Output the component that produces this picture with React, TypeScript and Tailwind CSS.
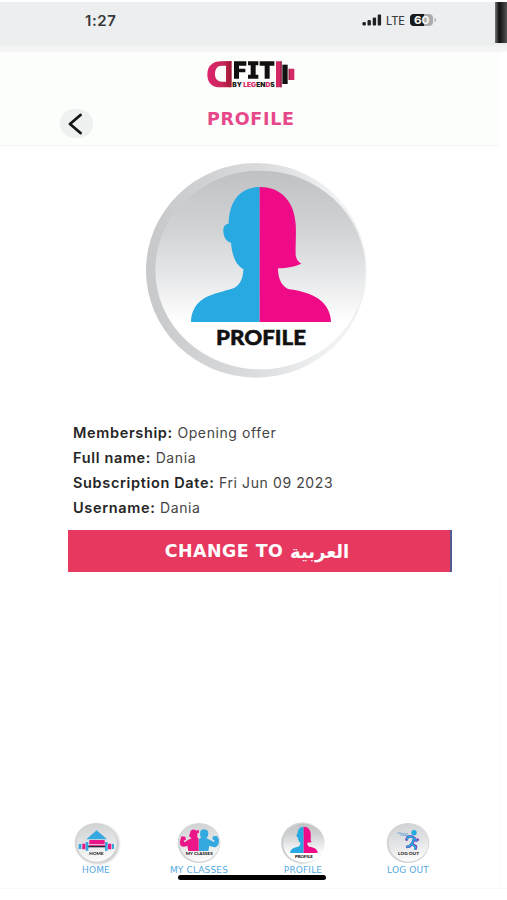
import React from "react";

const VERDANA = "font-['DejaVu_Sans',Verdana,sans-serif]";

function Silhouette() {
  return (
    <>
      <path fill="#29a9e1" d="M389 97C330 97 297 140 296 207C283 208 279 219 280 231C281 246 288 260 303 264C306 300 317 332 340 343C340 366 333 389 312 400C267 416 220 418 195 458C186 473 183 487 183 502H389Z" />
      <path fill="#ef0a87" d="M389 97C456 96 493 145 497 207C499 240 496 275 497 302C499 313 503 321 514 327C493 336 474 340 444 341C444 367 451 391 474 403C515 409 562 419 587 453C598 469 603 486 603 502H389Z" />
    </>
  );
}

function ProfileBadge({ small = false }: { small?: boolean }) {
  const id = small ? "small" : "large";
  return (
    <svg
      className={small ? "h-[42px] w-[44px] overflow-visible" : "h-[216px] w-[223px] shrink-0"}
      viewBox="45 22 669 648"
      preserveAspectRatio="none"
      aria-label="Profile"
    >
      <defs>
        <linearGradient id={`rim-${id}`} x1="0" y1=".45" x2="1" y2=".5">
          <stop offset="0" stopColor="#c6c8ca" />
          <stop offset=".5" stopColor="#dadbdc" />
          <stop offset=".85" stopColor="#f1f2f3" />
          <stop offset="1" stopColor="#eff0f1" />
        </linearGradient>
        <linearGradient id={`face-${id}`} x1="0" y1="0" x2="0" y2="1">
          <stop offset="0" stopColor="#bfc1c3" />
          <stop offset=".3" stopColor="#d1d3d4" />
          <stop offset=".55" stopColor="#e8e9ea" />
          <stop offset=".76" stopColor="#ffffff" />
        </linearGradient>
      </defs>
      <ellipse cx="379" cy="347" rx="331" ry="322" fill={`url(#rim-${id})`} />
      <ellipse cx="391" cy="346" rx="315" ry="298" fill={`url(#face-${id})`} />
      <Silhouette />
      <text x="258" y="571" textLength="270" lengthAdjust="spacingAndGlyphs" fill="#111" stroke="#111" strokeWidth="1.5" fontFamily="Lato, sans-serif" fontWeight="900" fontSize="63">PROFILE</text>
    </svg>
  );
}

function BadgeBase({ id }: { id: string }) {
  return (
    <>
      <defs>
        <linearGradient id={id} x1="0" y1="0" x2="0.15" y2="1">
          <stop offset="0" stopColor="#cfd0d2" />
          <stop offset=".6" stopColor="#e5e6e7" />
          <stop offset="1" stopColor="#fafafa" />
        </linearGradient>
      </defs>
      <ellipse cx="66" cy="63" rx="64" ry="60" fill="#d4d5d7" />
      <ellipse cx="68" cy="62" rx="60" ry="57" fill={`url(#${id})`} />
    </>
  );
}

function HomeBadge() {
  return (
    <svg className="h-[42px] w-[44px] overflow-visible drop-shadow-[2px_1px_1px_#cccccc]" viewBox="0 0 132 126" aria-label="Home">
      <BadgeBase id="home-face" />
      <path fill="#35a8df" d="M68 25 99 52H37Z" />
      <path fill="#e81688" d="M46 54H92V66H46Z" />
      <path fill="#26263c" d="M39 71H99V76H39Z" />
      <path fill="#35a8df" d="M35 60H43V86H35ZM93 60H101V86H93ZM14 66H22V81H14ZM114 66H120V81H114Z" />
      <path fill="#e81688" d="M25 65H34V82H25ZM102 65H112V82H102ZM45 68H94V71H45Z" />
      <text x="46" y="99" textLength="43" lengthAdjust="spacingAndGlyphs" fontFamily="Lato, sans-serif" fontWeight="900" fontSize="13" fill="#171717">HOME</text>
    </svg>
  );
}

function ClassesBadge() {
  return (
    <svg className="h-[42px] w-[44px] overflow-visible" viewBox="0 0 132 126" aria-label="My classes">
      <BadgeBase id="classes-face" />
      <path fill="#eb1688" d="M65 87H34L31 71C22 75 14 76 10 69C7 61 10 52 14 43L25 44L27 53L20 56L22 61L38 51L43 50L40 45L36 43L39 34C38 23 52 19 58 26L65 23L66 32L61 34V45L65 51Z" />
      <path fill="#34a9df" d="M66 87V51L72 47L69 38L70 28C74 19 92 20 94 32L93 42L88 48L95 52L111 60L113 56L106 51L108 43L120 42L125 51C128 66 121 76 111 76L97 71L94 87Z" />
      <text x="26" y="100" textLength="81" lengthAdjust="spacingAndGlyphs" fontFamily="Lato, sans-serif" fontWeight="900" fontSize="13" fill="#171717">MY CLASSES</text>
    </svg>
  );
}

function LogoutBadge() {
  return (
    <svg className="h-[42px] w-[44px] overflow-visible" viewBox="0 0 132 126" aria-label="Log out">
      <BadgeBase id="logout-face" />
      <circle cx="84" cy="32" r="8" fill="#21a9e0" />
      <path d="M77 43 86 49 78 66 90 73 88 83M78 64 71 73 60 75M78 44 66 44 60 56M83 47 91 56 98 51" fill="none" stroke="#7b4cba" strokeWidth="8" strokeLinejoin="round" />
      <path d="M76 43 84 49 77 65 88 75 86 83M76 66 69 73 61 74M78 45 67 44 63 53M85 50 92 57" fill="none" stroke="#20a8df" strokeWidth="5" strokeLinejoin="round" />
      <path d="M34 34C44 29 51 40 66 35M43 40C52 37 57 43 67 40" fill="none" stroke="#76a7d7" strokeWidth="3" />
      <text x="36" y="99" textLength="63" lengthAdjust="spacingAndGlyphs" fontFamily="Lato, sans-serif" fontWeight="900" fontSize="12" fill="#171717">LOG OUT</text>
    </svg>
  );
}

function Logo() {
  return (
    <svg className="h-[29px] w-[88px]" viewBox="37 31 264 87" aria-label="D FIT by Legends">
      <defs>
        <linearGradient id="logo-red">
          <stop offset="0" stopColor="#dd246f" />
          <stop offset=".65" stopColor="#c72855" />
          <stop offset="1" stopColor="#9d1735" />
        </linearGradient>
      </defs>
      <path fill="url(#logo-red)" d="M111 34V113H76C52 113 38 98 38 75C38 49 54 35 79 35ZM94 48H81C68 48 61 58 61 74C61 89 70 96 82 96H94Z" />
      <path fill="#101010" d="M118 35H155V48H133V57H152V68H133V87H118ZM160 35H191V47H183V75H191V87H160V75H168V47H160ZM195 35H239V48H225V87H210V48H195Z" />
      <text x="113" y="111" textLength="127" lengthAdjust="spacingAndGlyphs" fontFamily="Inter, sans-serif" fontWeight="900" fontSize="17" fill="#171717">BY <tspan fill="#d92765">LEG</tspan>EN<tspan fill="#d92765">D</tspan>S</text>
      <path fill="#d52866" d="M244 35H261V113H244ZM282 57H299V91H282Z" />
      <path fill="#111" d="M263 45H279V103H263Z" />
      <path fill="#8e2745" d="M257 35H261V113H257ZM282 57H285V91H282Z" />
    </svg>
  );
}

function StatusBar() {
  return (
    <div className="mt-[2px] flex h-[41px] shrink-0 bg-[#edeeef]">
      <div className="ml-[85px] mt-[9px] w-[276px] font-['Inter',sans-serif] text-[15px] font-semibold leading-[19px] tracking-[0.6px] text-[#38393b]">1:27</div>
      <svg className="mt-[11px] h-[14px] w-[76px]" viewBox="0 0 76 14" aria-label="Signal and battery">
        <g fill="#202122">
          <rect x="1.5" y="9" width="3.4" height="3.5" rx="1.2" />
          <rect x="6.5" y="7" width="3.4" height="5.5" rx="1" />
          <rect x="11.7" y="4.5" width="3.4" height="8" rx="1" />
          <rect x="16.7" y="1.5" width="3.4" height="11" rx="1" />
        </g>
        <text x="25" y="12" textLength="19" lengthAdjust="spacingAndGlyphs" fontFamily="Inter, sans-serif" fontSize="11.5" fontWeight="500" fill="#3e3f40">LTE</text>
        <rect x="49" y="1" width="23" height="12" rx="4" fill="#aaabad" />
        <path d="M53 1H63V13H53Q49 13 49 9V5Q49 1 53 1" fill="#18191a" />
        <path d="M73.5 5Q75 5 75 7T73.5 9Z" fill="#aaabad" />
        <text x="53" y="11" textLength="15.5" lengthAdjust="spacingAndGlyphs" fontFamily="Inter, sans-serif" fontSize="11" fontWeight="700" fill="#f7f7f7">60</text>
      </svg>
      <div className="ml-auto w-[12px] bg-linear-to-r from-[#77797a] via-[#111111] via-35% to-[#555555]" />
    </div>
  );
}

const details = [
  { label: "Membership:", value: "Opening offer" },
  { label: "Full name:", value: "Dania" },
  { label: "Subscription Date:", value: "Fri Jun 09 2023" },
  { label: "Username:", value: "Dania" },
];

const navItems = [
  { label: "HOME", icon: <HomeBadge /> },
  { label: "MY CLASSES", icon: <ClassesBadge /> },
  { label: "PROFILE", icon: <ProfileBadge small /> },
  { label: "LOG OUT", icon: <LogoutBadge /> },
];

export default function App() {
  return (
    <main className="flex h-[900px] w-[507px] flex-col overflow-hidden bg-white">
      <StatusBar />
      <div className="h-[9px] shrink-0 bg-linear-to-b from-[#e8e9e9] via-[#f0f1f1] via-30% to-[#f6f7f6]" />
      <header className="flex h-[94px] w-[500px] shrink-0 flex-col border-b border-[#f3f4f3] bg-[#fcfefb]">
        <div className="ml-[207px] mt-[8px] h-[29px]"><Logo /></div>
        <div className="mt-[16px] flex">
          <button aria-label="Back" className="ml-[60px] mt-[4px] flex h-[29px] w-[33px] items-center justify-center rounded-full bg-[#eff0f0]">
            <svg className="mr-[4px] h-[22px] w-[14px]" viewBox="0 0 14 22" fill="none"><path d="M12.5 2 2 11 12.5 20" stroke="#151515" strokeWidth="2.8" strokeLinecap="round" strokeLinejoin="round" /></svg>
          </button>
          <h1 className={`ml-[114px] mt-[2px] h-[24px] text-[17.5px] font-bold leading-[24px] tracking-[0.7px] text-[#e7488a] ${VERDANA}`}>PROFILE</h1>
        </div>
      </header>
      <section className="ml-[145px] mt-[16px] h-[216px] shrink-0"><ProfileBadge /></section>
      <section className="ml-[73px] mt-[42px] h-[100px] shrink-0 whitespace-nowrap font-['Inter',sans-serif] text-[14px] leading-[25px] tracking-[0.6px] text-[#454545]">
        {details.map((item) => (
          <p key={item.label}><strong className="text-[14.5px] font-semibold tracking-[0.65px] text-[#252525]">{item.label}</strong> {item.value}</p>
        ))}
      </section>
      <button className={`ml-[68px] mt-[10px] flex h-[42px] w-[384px] shrink-0 items-center justify-center whitespace-pre border-r-2 border-[#515a91] bg-[#e7385f] pt-px pr-[4px] text-[17.4px] font-bold tracking-[0.5px] text-white ${VERDANA}`}>
        <span>CHANGE TO </span><span lang="ar" dir="rtl" className="text-[18px] tracking-normal">العربية</span>
      </button>
      <div className="flex w-[500px] grow border-r border-[#fafafa]" />
      <nav className="h-[68px] w-[500px] shrink-0 border-r border-[#fafafa] pt-[2px]">
        <div className="ml-[44px] grid grid-cols-[104px_102px_106px_104px]">
          {navItems.map((item) => (
            <a key={item.label} className={`flex flex-col items-center text-[9px] leading-[13px] tracking-[0.15px] text-[#55a9df] ${VERDANA}`}>
              {item.icon}
              <span>{item.label}</span>
            </a>
          ))}
        </div>
        <div className="ml-[178px] -mt-[2px] h-[5px] w-[148px] rounded-full bg-black" />
      </nav>
      <footer className="h-[12px] shrink-0 border-t border-[#f7f7f7]" />
    </main>
  );
}
